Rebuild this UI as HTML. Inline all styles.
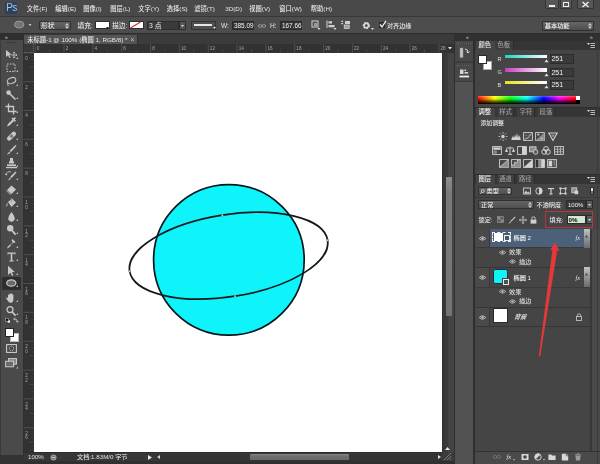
<!DOCTYPE html>
<html lang="zh-CN"><head><meta charset="utf-8"><title>Photoshop</title>
<style>
html,body{margin:0;padding:0;}
body{width:600px;height:464px;overflow:hidden;background:#4a4a4a;position:relative;font-family:"Liberation Sans","Noto Sans CJK SC",sans-serif;}
#app{position:absolute;left:0;top:0;width:600px;height:464px;overflow:hidden;will-change:transform;}
#app div{position:absolute;box-sizing:border-box;}
#app svg{position:absolute;overflow:visible;}
.t{position:absolute;white-space:nowrap;line-height:12px;height:12px;letter-spacing:0;font-weight:500;}
</style></head><body><div id="app">
<div style="left:0px;top:0px;width:600px;height:16px;background:#494949;"></div>
<div style="left:4.8px;top:1.5px;width:12.4px;height:12px;background:#30415a;"></div>
<span class="t" style="left:6.2px;top:1.5999999999999996px;font-size:10px;color:#a0c4f2;font-weight:400;letter-spacing:-0.6px;">Ps</span>
<span class="t" style="left:26.8px;top:2.8000000000000007px;font-size:6.25px;color:#e8e8e8;">文件(F)</span>
<span class="t" style="left:55.3px;top:2.8000000000000007px;font-size:6.25px;color:#e8e8e8;">编辑(E)</span>
<span class="t" style="left:83.3px;top:2.8000000000000007px;font-size:6.25px;color:#e8e8e8;">图像(I)</span>
<span class="t" style="left:110.3px;top:2.8000000000000007px;font-size:6.25px;color:#e8e8e8;">图层(L)</span>
<span class="t" style="left:138.3px;top:2.8000000000000007px;font-size:6.25px;color:#e8e8e8;">文字(Y)</span>
<span class="t" style="left:166.8px;top:2.8000000000000007px;font-size:6.25px;color:#e8e8e8;">选择(S)</span>
<span class="t" style="left:194.3px;top:2.8000000000000007px;font-size:6.25px;color:#e8e8e8;">滤镜(T)</span>
<span class="t" style="left:225.3px;top:2.8000000000000007px;font-size:6.25px;color:#e8e8e8;">3D(D)</span>
<span class="t" style="left:249.3px;top:2.8000000000000007px;font-size:6.25px;color:#e8e8e8;">视图(V)</span>
<span class="t" style="left:279.3px;top:2.8000000000000007px;font-size:6.25px;color:#e8e8e8;">窗口(W)</span>
<span class="t" style="left:310.8px;top:2.8000000000000007px;font-size:6.25px;color:#e8e8e8;">帮助(H)</span>
<div style="left:544.7px;top:-1px;width:14px;height:9.6px;background:#575757;border:1px solid #353535;border-radius:1px;"></div>
<div style="left:548.7px;top:5px;width:6px;height:1.6px;background:#f0f0f0;"></div>
<div style="left:559.7px;top:-1px;width:12.6px;height:9.6px;background:#575757;border:1px solid #353535;border-radius:1px;"></div>
<div style="left:563px;top:2.3px;width:6px;height:4.5px;border:1.2px solid #f0f0f0;"></div>
<div style="left:576.5px;top:-1px;width:17px;height:9.6px;background:#575757;border:1px solid #353535;border-radius:1px;"></div>
<svg style="left:581.5px;top:2px" width="7" height="5" viewBox="0 0 7 5"><path d="M0.5 0 L6.5 5 M6.5 0 L0.5 5" stroke="#f0f0f0" stroke-width="1.4"/></svg>
<div style="left:0px;top:15.6px;width:600px;height:17.9px;background:#4d4d4d;border-top:1px solid #383838;"></div>
<svg style="left:13.5px;top:20px" width="19" height="9" viewBox="0 0 19 9"><ellipse cx="5.2" cy="4.6" rx="4.6" ry="3.3" fill="#747474" stroke="#a4a4a4" stroke-width="0.9"/><path d="M14.5 4 L17.5 4 L16 6 Z" fill="#d0d0d0"/></svg>
<div style="left:38.5px;top:20.5px;width:32.5px;height:9.5px;background:linear-gradient(180deg,#646464,#535353);border:1px solid #303030;border-radius:1px;"></div>
<span class="t" style="left:41px;top:19.5px;font-size:6.8px;color:#e0e0e0;">形状</span>
<svg style="left:65px;top:22.5px" width="4" height="6" viewBox="0 0 4 6"><path d="M0 2.4 L2 0 L4 2.4 Z M0 3.6 L2 6 L4 3.6 Z" fill="#d0d0d0"/></svg>
<span class="t" style="left:77.5px;top:19.5px;font-size:6.8px;color:#e0e0e0;">填充:</span>
<div style="left:95px;top:21px;width:14.5px;height:8px;background:#ffffff;border:1px solid #2e2e2e;"></div>
<svg style="left:106px;top:26.5px" width="3" height="2" viewBox="0 0 3 2"><path d="M0 0 L3 0 L1.5 2 Z" fill="#222"/></svg>
<span class="t" style="left:112px;top:19.5px;font-size:6.8px;color:#e0e0e0;">描边:</span>
<div style="left:129px;top:21px;width:14.5px;height:8px;background:#ffffff;border:1px solid #2e2e2e;"></div>
<svg style="left:130px;top:22px" width="12.5" height="6" viewBox="0 0 12.5 6"><path d="M0.5 6 L10.5 0" stroke="#d23030" stroke-width="1.3"/></svg>
<div style="left:146.5px;top:20.5px;width:32px;height:9.5px;background:#3a3a3a;border:1px solid #2e2e2e;"></div>
<span class="t" style="left:149px;top:19.5px;font-size:6.8px;color:#e8e8e8;">3 点</span>
<div style="left:179px;top:20.5px;width:6.5px;height:9.5px;background:#565656;border:1px solid #2e2e2e;"></div>
<svg style="left:181px;top:24.5px" width="3" height="2" viewBox="0 0 3 2"><path d="M0 0 L3 0 L1.5 2 Z" fill="#ddd"/></svg>
<div style="left:191px;top:20.5px;width:25px;height:9.5px;background:#4f4f4f;border:1px solid #333;"></div>
<div style="left:193.5px;top:24px;width:18px;height:2px;background:#e6e6e6;"></div>
<svg style="left:212.5px;top:26.5px" width="3" height="2" viewBox="0 0 3 2"><path d="M0 0 L3 0 L1.5 2 Z" fill="#ddd"/></svg>
<span class="t" style="left:221px;top:19.5px;font-size:6.6px;color:#e0e0e0;">W:</span>
<div style="left:232px;top:20.5px;width:22px;height:9.5px;background:#363636;border:1px solid #2a2a2a;"></div>
<span class="t" style="left:234px;top:19.5px;font-size:6.4px;color:#f0f0f0;">385.09</span>
<svg style="left:258px;top:23.5px" width="8" height="4" viewBox="0 0 8 4"><rect x="0.4" y="0.6" width="3.4" height="2.8" rx="1.4" fill="none" stroke="#aaa" stroke-width="0.8"/><rect x="4.2" y="0.6" width="3.4" height="2.8" rx="1.4" fill="none" stroke="#aaa" stroke-width="0.8"/></svg>
<span class="t" style="left:270px;top:19.5px;font-size:6.6px;color:#e0e0e0;">H:</span>
<div style="left:280px;top:20.5px;width:22px;height:9.5px;background:#363636;border:1px solid #2a2a2a;"></div>
<span class="t" style="left:282px;top:19.5px;font-size:6.4px;color:#f0f0f0;">167.66</span>
<svg style="left:311px;top:20px" width="10" height="10" viewBox="0 0 10 10"><rect x="1" y="1" width="6" height="6" fill="none" stroke="#d5d5d5" stroke-width="1"/><rect x="3" y="3" width="3" height="3" fill="#9a9a9a"/><path d="M6.5 8 L9.5 8 L8 10 Z" fill="#ddd"/></svg>
<svg style="left:326px;top:20px" width="11" height="10" viewBox="0 0 11 10"><path d="M1 0.5 V8" stroke="#d5d5d5" stroke-width="1"/><rect x="2.5" y="1.2" width="3.5" height="2.3" fill="#cfcfcf"/><rect x="2.5" y="5" width="6" height="2.3" fill="#cfcfcf"/><path d="M7.5 8 L10.5 8 L9 10 Z" fill="#ddd"/></svg>
<svg style="left:341px;top:20px" width="11" height="10" viewBox="0 0 11 10"><rect x="4" y="1" width="5" height="3" fill="#cfcfcf"/><rect x="3.2" y="5" width="5" height="3.4" fill="#9f9f9f" stroke="#ddd" stroke-width="0.7"/><path d="M0 2 L2.4 2 L1.2 0.2 Z M0 3 L2.4 3 L1.2 4.8 Z" fill="#ddd"/></svg>
<svg style="left:361.5px;top:20.5px" width="12" height="10" viewBox="0 0 12 10"><circle cx="4.3" cy="4.5" r="2.6" fill="none" stroke="#d8d8d8" stroke-width="2" stroke-dasharray="1.6 0.9"/><circle cx="4.3" cy="4.5" r="2.2" fill="none" stroke="#d8d8d8" stroke-width="1.4"/><path d="M9 7 L12 7 L10.5 9 Z" fill="#ddd"/></svg>
<div style="left:378.5px;top:21.5px;width:6.5px;height:6.5px;background:#3a3a3a;border:1px solid #2a2a2a;"></div>
<svg style="left:379px;top:19.5px" width="8" height="8" viewBox="0 0 8 8"><path d="M1 4.5 L3 7 L7 0.8" stroke="#f2f2f2" stroke-width="1.3" fill="none"/></svg>
<span class="t" style="left:387px;top:19.5px;font-size:6.1px;color:#e6e6e6;">对齐边缘</span>
<div style="left:541.8px;top:20.5px;width:52px;height:10.6px;background:linear-gradient(180deg,#676767,#4e4e4e);border:1px solid #303030;border-radius:1px;"></div>
<span class="t" style="left:544.8px;top:19.8px;font-size:6.2px;color:#f4f4f4;">基本功能</span>
<svg style="left:587.5px;top:22.8px" width="4" height="6" viewBox="0 0 4 6"><path d="M0 2.4 L2 0 L4 2.4 Z M0 3.6 L2 6 L4 3.6 Z" fill="#d0d0d0"/></svg>
<div style="left:0px;top:33px;width:600px;height:1.2px;background:#2d2d2d;"></div>
<div style="left:0px;top:34px;width:23px;height:430px;background:#4a4a4a;"></div>
<div style="left:0px;top:34px;width:23px;height:6px;background:#2f2f2f;"></div>
<span class="t" style="left:5px;top:30.5px;font-size:5px;color:#cfcfcf;line-height:12px;">»</span>
<div style="left:22.5px;top:34px;width:1px;height:430px;background:#303030;"></div>
<div style="left:0px;top:40px;width:1.2px;height:415px;background:#3a3a3a;"></div>
<div style="left:7px;top:42px;width:9px;height:1px;border-top:1px dotted #2e2e2e;"></div>
<svg style="left:5px;top:48.5px" width="13" height="12" viewBox="0 0 13 12"><path d="M1 1 L1 8 L3 6.2 L4.4 9 L5.6 8.4 L4.3 5.8 L6.6 5.6 Z" fill="#c8c8c8"/><path d="M9 3 V9 M6 6 H12 M9 3 L8 4.2 M9 3 L10 4.2 M9 9 L8 7.8 M9 9 L10 7.8 M12 6 L10.8 5 M12 6 L10.8 7" stroke="#c8c8c8" stroke-width="0.8" fill="none"/><path d="M11 10 L13 10 L13 8 Z" fill="#bdbdbd"/></svg>
<svg style="left:5px;top:62px" width="13" height="12" viewBox="0 0 13 12"><rect x="2" y="2" width="8" height="7.5" fill="none" stroke="#c8c8c8" stroke-width="1" stroke-dasharray="1.6 1.2"/><path d="M11 10 L13 10 L13 8 Z" fill="#bdbdbd"/></svg>
<svg style="left:5px;top:75.5px" width="13" height="12" viewBox="0 0 13 12"><ellipse cx="6.5" cy="4.6" rx="4.4" ry="2.8" fill="none" stroke="#c8c8c8" stroke-width="1.1" transform="rotate(-20 6.5 4.6)"/><path d="M3.2 6.6 Q2 8.5 3.4 10" stroke="#c8c8c8" stroke-width="1" fill="none"/><path d="M11 10 L13 10 L13 8 Z" fill="#bdbdbd"/></svg>
<svg style="left:5px;top:89px" width="13" height="12" viewBox="0 0 13 12"><path d="M4.5 4.5 L10.5 10.5" stroke="#c8c8c8" stroke-width="1.6"/><circle cx="3.6" cy="3.6" r="2.3" fill="#c8c8c8"/><path d="M11 10 L13 10 L13 8 Z" fill="#bdbdbd"/></svg>
<svg style="left:5px;top:102.5px" width="13" height="12" viewBox="0 0 13 12"><path d="M3.5 0.5 V8.5 H11.5 M0.5 3.5 H8.5 V11.5" stroke="#c8c8c8" stroke-width="1.3" fill="none"/><path d="M11 10 L13 10 L13 8 Z" fill="#bdbdbd"/></svg>
<svg style="left:5px;top:116px" width="13" height="12" viewBox="0 0 13 12"><path d="M2 10.5 L3 8 L7.5 3.5 L9 5 L4.5 9.5 Z" fill="#c8c8c8"/><path d="M7 2 L10.4 5.4 M8.4 3.6 L10.4 1.6" stroke="#c8c8c8" stroke-width="1.6"/><path d="M11 10 L13 10 L13 8 Z" fill="#bdbdbd"/></svg>
<svg style="left:5px;top:130px" width="13" height="12" viewBox="0 0 13 12"><rect x="1" y="4" width="11" height="4.4" rx="2.2" fill="#c8c8c8" transform="rotate(-45 6.5 6.2)"/><rect x="5" y="4.7" width="3" height="3" fill="#777" transform="rotate(-45 6.5 6.2)"/><path d="M11 10 L13 10 L13 8 Z" fill="#bdbdbd"/></svg>
<svg style="left:5px;top:143.5px" width="13" height="12" viewBox="0 0 13 12"><path d="M10.5 1 L11.5 2 L6 8 L4.6 6.8 Z" fill="#c8c8c8"/><path d="M4.2 7.4 L5.4 8.6 Q4 10.8 1.5 10.5 Q3.4 9.4 4.2 7.4 Z" fill="#c8c8c8"/><path d="M11 10 L13 10 L13 8 Z" fill="#bdbdbd"/></svg>
<svg style="left:5px;top:157px" width="13" height="12" viewBox="0 0 13 12"><path d="M5 1 H8 V3.4 L9 5 V6.4 H4 V5 L5 3.4 Z" fill="#c8c8c8"/><rect x="2" y="7.4" width="9" height="1.8" fill="#c8c8c8"/><rect x="1" y="10" width="11" height="1.2" fill="#c8c8c8"/><path d="M11 10 L13 10 L13 8 Z" fill="#bdbdbd"/></svg>
<svg style="left:5px;top:170px" width="13" height="12" viewBox="0 0 13 12"><path d="M10.5 1.5 L11.5 2.5 L6.5 8 L5.2 6.8 Z" fill="#c8c8c8"/><path d="M4.8 7.4 L6 8.6 Q4.8 10.6 2.5 10.4 Q4.2 9.4 4.8 7.4 Z" fill="#c8c8c8"/><path d="M1 5 A3.5 3.5 0 0 1 6 2" stroke="#c8c8c8" stroke-width="0.9" fill="none"/><path d="M0 3.6 L1 5.6 L2.6 4.2 Z" fill="#c8c8c8"/><path d="M11 10 L13 10 L13 8 Z" fill="#bdbdbd"/></svg>
<svg style="left:5px;top:183.5px" width="13" height="12" viewBox="0 0 13 12"><path d="M6.5 1.5 L11 5.5 L6.5 10 L2 6 Z" fill="#c8c8c8"/><path d="M2 6 L6.5 10 L5.2 11 L1 7 Z" fill="#8d8d8d"/><path d="M11 10 L13 10 L13 8 Z" fill="#bdbdbd"/></svg>
<svg style="left:5px;top:197px" width="13" height="12" viewBox="0 0 13 12"><path d="M3 5 L7 1.5 L11 5.5 L6.5 10 Z" fill="#c8c8c8"/><path d="M2.6 5.4 Q0.6 8 1.6 10 Q3 8.6 2.6 5.4 Z" fill="#c8c8c8"/><path d="M6.4 0.5 V5" stroke="#888" stroke-width="0.8"/><path d="M11 10 L13 10 L13 8 Z" fill="#bdbdbd"/></svg>
<svg style="left:5px;top:210.5px" width="13" height="12" viewBox="0 0 13 12"><path d="M6.5 1 Q10.6 6.2 9.6 8.6 Q8.6 10.8 6.5 10.8 Q4.4 10.8 3.4 8.6 Q2.4 6.2 6.5 1 Z" fill="#c8c8c8"/><path d="M11 10 L13 10 L13 8 Z" fill="#bdbdbd"/></svg>
<svg style="left:5px;top:224px" width="13" height="12" viewBox="0 0 13 12"><circle cx="5.2" cy="4.2" r="3.2" fill="#c8c8c8"/><path d="M7.2 6.6 L10.6 10.6" stroke="#c8c8c8" stroke-width="1.7"/><path d="M11 10 L13 10 L13 8 Z" fill="#bdbdbd"/></svg>
<svg style="left:5px;top:238px" width="13" height="12" viewBox="0 0 13 12"><path d="M7.5 1 L10.5 4 L9.4 5 L8 4.8 L4 9.6 L2 10.5 L2.8 8.4 L7.6 4.4 L6.6 2.2 Z" fill="#c8c8c8"/><circle cx="6.3" cy="6" r="0.8" fill="#555"/><path d="M11 10 L13 10 L13 8 Z" fill="#bdbdbd"/></svg>
<svg style="left:5px;top:251px" width="13" height="12" viewBox="0 0 13 12"><path d="M2.5 1.5 H10.5 V3.6 H9.6 V2.8 H7.3 V9.6 H8.6 V10.6 H4.4 V9.6 H5.7 V2.8 H3.4 V3.6 H2.5 Z" fill="#c8c8c8"/><path d="M11 10 L13 10 L13 8 Z" fill="#bdbdbd"/></svg>
<svg style="left:5px;top:264.5px" width="13" height="12" viewBox="0 0 13 12"><path d="M3 0.8 L3 10 L5.4 7.8 L7 11 L8.3 10.3 L6.8 7.2 L9.8 7 Z" fill="#c8c8c8"/><path d="M11 10 L13 10 L13 8 Z" fill="#bdbdbd"/></svg>
<div style="left:2px;top:276.5px;width:19px;height:13px;background:#2e2e2e;border-radius:1.5px;"></div>
<svg style="left:5px;top:277px" width="13" height="12" viewBox="0 0 13 12"><ellipse cx="6.3" cy="6" rx="4.6" ry="3.2" fill="#6a6a6a" stroke="#c8c8c8" stroke-width="1.2"/><path d="M11 10 L13 10 L13 8 Z" fill="#bdbdbd"/></svg>
<svg style="left:5px;top:292px" width="13" height="12" viewBox="0 0 13 12"><path d="M3 6 V3 Q3.6 2 4.2 3 V2 Q4.9 1 5.6 2 V1.8 Q6.3 0.8 7 1.8 V2.6 Q7.7 1.8 8.4 2.8 V7 Q8.4 10.6 6 10.8 Q3.6 10.8 2.6 8.6 L1 6 Q1.6 5 3 6 Z" fill="#c8c8c8"/><path d="M11 10 L13 10 L13 8 Z" fill="#bdbdbd"/></svg>
<svg style="left:5px;top:304.5px" width="13" height="12" viewBox="0 0 13 12"><circle cx="5" cy="4.6" r="3" fill="none" stroke="#c8c8c8" stroke-width="1.3"/><path d="M7.2 7 L10.6 10.6" stroke="#c8c8c8" stroke-width="1.7"/><path d="M11 10 L13 10 L13 8 Z" fill="#bdbdbd"/></svg>
<svg style="left:5px;top:317px" width="14" height="8" viewBox="0 0 14 8"><rect x="2.2" y="3" width="3" height="3" fill="#fff" stroke="#222" stroke-width="0.5"/><rect x="0.5" y="1.2" width="3" height="3" fill="#111" stroke="#ccc" stroke-width="0.5"/><path d="M9.5 2 Q12 1.6 12.4 4.6 M8.6 2 L10.2 0.8 M8.6 2 L10.2 3.2 M12.4 5.4 L11.2 4 M12.4 5.4 L13.6 4" stroke="#d0d0d0" stroke-width="0.8" fill="none"/></svg>
<div style="left:9.8px;top:332.6px;width:9.4px;height:9.4px;background:#ffffff;border:1px solid #222;outline:0.6px solid #bbb;outline-offset:-1.6px;"></div>
<div style="left:4.6px;top:327.6px;width:9.6px;height:9.6px;background:#ffffff;border:1px solid #222;"></div>
<svg style="left:6px;top:344px" width="11" height="9" viewBox="0 0 11 9"><rect x="0.6" y="0.6" width="9.8" height="7.8" fill="none" stroke="#d4d4d4" stroke-width="1"/><circle cx="5.5" cy="4.5" r="2.2" fill="none" stroke="#d4d4d4" stroke-width="0.9" stroke-dasharray="1 0.8"/></svg>
<svg style="left:5px;top:357.5px" width="14" height="11" viewBox="0 0 14 11"><rect x="3.5" y="0.6" width="8" height="5.6" fill="#8a8a8a" stroke="#d4d4d4" stroke-width="0.9"/><rect x="0.6" y="3.2" width="8" height="5.6" fill="#6a6a6a" stroke="#d4d4d4" stroke-width="0.9"/><path d="M11 10.5 L13 10.5 L13 8.5 Z" fill="#bdbdbd"/></svg>
<div style="left:23.5px;top:34px;width:430px;height:10px;background:#3b3b3b;"></div>
<div style="left:23.5px;top:35px;width:114px;height:9px;background:#555555;border-right:1px solid #2e2e2e;"></div>
<span class="t" style="left:27.3px;top:33.6px;font-size:6.25px;color:#e8e8e8;">未标题-1 @ 100% (椭圆 1, RGB/8) *</span>
<span class="t" style="left:130.5px;top:33.6px;font-size:6.5px;color:#d0d0d0;">×</span>
<div style="left:23.5px;top:44px;width:430px;height:8.5px;background:#323232;"></div>
<div style="left:23.5px;top:44px;width:10.5px;height:408px;background:#323232;"></div>
<div style="left:23.5px;top:44px;width:10.5px;height:8.5px;background:#383838;border-right:1px dotted #666;border-bottom:1px dotted #666;"></div>
<svg style="left:0;top:0" width="600" height="464" viewBox="0 0 600 464" font-family="Liberation Sans, sans-serif"><path d="M35.20 44 V52.5" stroke="#5c5c5c" stroke-width="0.7"/><text x="36.80" y="49.8" font-size="4.6" fill="#a6a6a6">0</text><path d="M38.80 51.8 V52.5" stroke="#484848" stroke-width="0.6"/><path d="M42.41 51 V52.5" stroke="#484848" stroke-width="0.6"/><path d="M46.02 51.8 V52.5" stroke="#484848" stroke-width="0.6"/><path d="M49.62 49.5 V52.5" stroke="#505050" stroke-width="0.7"/><path d="M53.23 51.8 V52.5" stroke="#484848" stroke-width="0.6"/><path d="M56.83 51 V52.5" stroke="#484848" stroke-width="0.6"/><path d="M60.44 51.8 V52.5" stroke="#484848" stroke-width="0.6"/><path d="M64.04 44 V52.5" stroke="#5c5c5c" stroke-width="0.7"/><text x="65.64" y="49.8" font-size="4.6" fill="#a6a6a6">2</text><path d="M67.65 51.8 V52.5" stroke="#484848" stroke-width="0.6"/><path d="M71.25 51 V52.5" stroke="#484848" stroke-width="0.6"/><path d="M74.86 51.8 V52.5" stroke="#484848" stroke-width="0.6"/><path d="M78.46 49.5 V52.5" stroke="#505050" stroke-width="0.7"/><path d="M82.07 51.8 V52.5" stroke="#484848" stroke-width="0.6"/><path d="M85.67 51 V52.5" stroke="#484848" stroke-width="0.6"/><path d="M89.28 51.8 V52.5" stroke="#484848" stroke-width="0.6"/><path d="M92.88 44 V52.5" stroke="#5c5c5c" stroke-width="0.7"/><text x="94.48" y="49.8" font-size="4.6" fill="#a6a6a6">4</text><path d="M96.48 51.8 V52.5" stroke="#484848" stroke-width="0.6"/><path d="M100.09 51 V52.5" stroke="#484848" stroke-width="0.6"/><path d="M103.69 51.8 V52.5" stroke="#484848" stroke-width="0.6"/><path d="M107.30 49.5 V52.5" stroke="#505050" stroke-width="0.7"/><path d="M110.91 51.8 V52.5" stroke="#484848" stroke-width="0.6"/><path d="M114.51 51 V52.5" stroke="#484848" stroke-width="0.6"/><path d="M118.11 51.8 V52.5" stroke="#484848" stroke-width="0.6"/><path d="M121.72 44 V52.5" stroke="#5c5c5c" stroke-width="0.7"/><text x="123.32" y="49.8" font-size="4.6" fill="#a6a6a6">6</text><path d="M125.33 51.8 V52.5" stroke="#484848" stroke-width="0.6"/><path d="M128.93 51 V52.5" stroke="#484848" stroke-width="0.6"/><path d="M132.53 51.8 V52.5" stroke="#484848" stroke-width="0.6"/><path d="M136.14 49.5 V52.5" stroke="#505050" stroke-width="0.7"/><path d="M139.74 51.8 V52.5" stroke="#484848" stroke-width="0.6"/><path d="M143.35 51 V52.5" stroke="#484848" stroke-width="0.6"/><path d="M146.95 51.8 V52.5" stroke="#484848" stroke-width="0.6"/><path d="M150.56 44 V52.5" stroke="#5c5c5c" stroke-width="0.7"/><text x="152.16" y="49.8" font-size="4.6" fill="#a6a6a6">8</text><path d="M154.16 51.8 V52.5" stroke="#484848" stroke-width="0.6"/><path d="M157.77 51 V52.5" stroke="#484848" stroke-width="0.6"/><path d="M161.38 51.8 V52.5" stroke="#484848" stroke-width="0.6"/><path d="M164.98 49.5 V52.5" stroke="#505050" stroke-width="0.7"/><path d="M168.59 51.8 V52.5" stroke="#484848" stroke-width="0.6"/><path d="M172.19 51 V52.5" stroke="#484848" stroke-width="0.6"/><path d="M175.80 51.8 V52.5" stroke="#484848" stroke-width="0.6"/><path d="M179.40 44 V52.5" stroke="#5c5c5c" stroke-width="0.7"/><text x="181.00" y="49.8" font-size="4.6" fill="#a6a6a6">10</text><path d="M183.00 51.8 V52.5" stroke="#484848" stroke-width="0.6"/><path d="M186.61 51 V52.5" stroke="#484848" stroke-width="0.6"/><path d="M190.21 51.8 V52.5" stroke="#484848" stroke-width="0.6"/><path d="M193.82 49.5 V52.5" stroke="#505050" stroke-width="0.7"/><path d="M197.42 51.8 V52.5" stroke="#484848" stroke-width="0.6"/><path d="M201.03 51 V52.5" stroke="#484848" stroke-width="0.6"/><path d="M204.63 51.8 V52.5" stroke="#484848" stroke-width="0.6"/><path d="M208.24 44 V52.5" stroke="#5c5c5c" stroke-width="0.7"/><text x="209.84" y="49.8" font-size="4.6" fill="#a6a6a6">12</text><path d="M211.84 51.8 V52.5" stroke="#484848" stroke-width="0.6"/><path d="M215.45 51 V52.5" stroke="#484848" stroke-width="0.6"/><path d="M219.06 51.8 V52.5" stroke="#484848" stroke-width="0.6"/><path d="M222.66 49.5 V52.5" stroke="#505050" stroke-width="0.7"/><path d="M226.27 51.8 V52.5" stroke="#484848" stroke-width="0.6"/><path d="M229.87 51 V52.5" stroke="#484848" stroke-width="0.6"/><path d="M233.48 51.8 V52.5" stroke="#484848" stroke-width="0.6"/><path d="M237.08 44 V52.5" stroke="#5c5c5c" stroke-width="0.7"/><text x="238.68" y="49.8" font-size="4.6" fill="#a6a6a6">14</text><path d="M240.68 51.8 V52.5" stroke="#484848" stroke-width="0.6"/><path d="M244.29 51 V52.5" stroke="#484848" stroke-width="0.6"/><path d="M247.89 51.8 V52.5" stroke="#484848" stroke-width="0.6"/><path d="M251.50 49.5 V52.5" stroke="#505050" stroke-width="0.7"/><path d="M255.10 51.8 V52.5" stroke="#484848" stroke-width="0.6"/><path d="M258.71 51 V52.5" stroke="#484848" stroke-width="0.6"/><path d="M262.31 51.8 V52.5" stroke="#484848" stroke-width="0.6"/><path d="M265.92 44 V52.5" stroke="#5c5c5c" stroke-width="0.7"/><text x="267.52" y="49.8" font-size="4.6" fill="#a6a6a6">16</text><path d="M269.53 51.8 V52.5" stroke="#484848" stroke-width="0.6"/><path d="M273.13 51 V52.5" stroke="#484848" stroke-width="0.6"/><path d="M276.74 51.8 V52.5" stroke="#484848" stroke-width="0.6"/><path d="M280.34 49.5 V52.5" stroke="#505050" stroke-width="0.7"/><path d="M283.94 51.8 V52.5" stroke="#484848" stroke-width="0.6"/><path d="M287.55 51 V52.5" stroke="#484848" stroke-width="0.6"/><path d="M291.15 51.8 V52.5" stroke="#484848" stroke-width="0.6"/><path d="M294.76 44 V52.5" stroke="#5c5c5c" stroke-width="0.7"/><text x="296.36" y="49.8" font-size="4.6" fill="#a6a6a6">18</text><path d="M298.37 51.8 V52.5" stroke="#484848" stroke-width="0.6"/><path d="M301.97 51 V52.5" stroke="#484848" stroke-width="0.6"/><path d="M305.57 51.8 V52.5" stroke="#484848" stroke-width="0.6"/><path d="M309.18 49.5 V52.5" stroke="#505050" stroke-width="0.7"/><path d="M312.79 51.8 V52.5" stroke="#484848" stroke-width="0.6"/><path d="M316.39 51 V52.5" stroke="#484848" stroke-width="0.6"/><path d="M320.00 51.8 V52.5" stroke="#484848" stroke-width="0.6"/><path d="M323.60 44 V52.5" stroke="#5c5c5c" stroke-width="0.7"/><text x="325.20" y="49.8" font-size="4.6" fill="#a6a6a6">20</text><path d="M327.20 51.8 V52.5" stroke="#484848" stroke-width="0.6"/><path d="M330.81 51 V52.5" stroke="#484848" stroke-width="0.6"/><path d="M334.41 51.8 V52.5" stroke="#484848" stroke-width="0.6"/><path d="M338.02 49.5 V52.5" stroke="#505050" stroke-width="0.7"/><path d="M341.62 51.8 V52.5" stroke="#484848" stroke-width="0.6"/><path d="M345.23 51 V52.5" stroke="#484848" stroke-width="0.6"/><path d="M348.83 51.8 V52.5" stroke="#484848" stroke-width="0.6"/><path d="M352.44 44 V52.5" stroke="#5c5c5c" stroke-width="0.7"/><text x="354.04" y="49.8" font-size="4.6" fill="#a6a6a6">22</text><path d="M356.05 51.8 V52.5" stroke="#484848" stroke-width="0.6"/><path d="M359.65 51 V52.5" stroke="#484848" stroke-width="0.6"/><path d="M363.25 51.8 V52.5" stroke="#484848" stroke-width="0.6"/><path d="M366.86 49.5 V52.5" stroke="#505050" stroke-width="0.7"/><path d="M370.47 51.8 V52.5" stroke="#484848" stroke-width="0.6"/><path d="M374.07 51 V52.5" stroke="#484848" stroke-width="0.6"/><path d="M377.68 51.8 V52.5" stroke="#484848" stroke-width="0.6"/><path d="M381.28 44 V52.5" stroke="#5c5c5c" stroke-width="0.7"/><text x="382.88" y="49.8" font-size="4.6" fill="#a6a6a6">24</text><path d="M384.88 51.8 V52.5" stroke="#484848" stroke-width="0.6"/><path d="M388.49 51 V52.5" stroke="#484848" stroke-width="0.6"/><path d="M392.09 51.8 V52.5" stroke="#484848" stroke-width="0.6"/><path d="M395.70 49.5 V52.5" stroke="#505050" stroke-width="0.7"/><path d="M399.31 51.8 V52.5" stroke="#484848" stroke-width="0.6"/><path d="M402.91 51 V52.5" stroke="#484848" stroke-width="0.6"/><path d="M406.51 51.8 V52.5" stroke="#484848" stroke-width="0.6"/><path d="M410.12 44 V52.5" stroke="#5c5c5c" stroke-width="0.7"/><text x="411.72" y="49.8" font-size="4.6" fill="#a6a6a6">26</text><path d="M413.73 51.8 V52.5" stroke="#484848" stroke-width="0.6"/><path d="M417.33 51 V52.5" stroke="#484848" stroke-width="0.6"/><path d="M420.94 51.8 V52.5" stroke="#484848" stroke-width="0.6"/><path d="M424.54 49.5 V52.5" stroke="#505050" stroke-width="0.7"/><path d="M428.14 51.8 V52.5" stroke="#484848" stroke-width="0.6"/><path d="M431.75 51 V52.5" stroke="#484848" stroke-width="0.6"/><path d="M435.35 51.8 V52.5" stroke="#484848" stroke-width="0.6"/><path d="M438.96 44 V52.5" stroke="#5c5c5c" stroke-width="0.7"/><text x="440.56" y="49.8" font-size="4.6" fill="#a6a6a6">28</text><path d="M23.5 52.80 H34" stroke="#5c5c5c" stroke-width="0.7"/><text x="25.2" y="59.80" font-size="4.6" fill="#a6a6a6">0</text><path d="M32.4 56.40 H34" stroke="#484848" stroke-width="0.6"/><path d="M31.5 60.01 H34" stroke="#484848" stroke-width="0.6"/><path d="M32.4 63.61 H34" stroke="#484848" stroke-width="0.6"/><path d="M29.5 67.22 H34" stroke="#505050" stroke-width="0.7"/><path d="M32.4 70.83 H34" stroke="#484848" stroke-width="0.6"/><path d="M31.5 74.43 H34" stroke="#484848" stroke-width="0.6"/><path d="M32.4 78.03 H34" stroke="#484848" stroke-width="0.6"/><path d="M23.5 81.64 H34" stroke="#5c5c5c" stroke-width="0.7"/><text x="25.2" y="88.64" font-size="4.6" fill="#a6a6a6">2</text><path d="M32.4 85.25 H34" stroke="#484848" stroke-width="0.6"/><path d="M31.5 88.85 H34" stroke="#484848" stroke-width="0.6"/><path d="M32.4 92.45 H34" stroke="#484848" stroke-width="0.6"/><path d="M29.5 96.06 H34" stroke="#505050" stroke-width="0.7"/><path d="M32.4 99.67 H34" stroke="#484848" stroke-width="0.6"/><path d="M31.5 103.27 H34" stroke="#484848" stroke-width="0.6"/><path d="M32.4 106.88 H34" stroke="#484848" stroke-width="0.6"/><path d="M23.5 110.48 H34" stroke="#5c5c5c" stroke-width="0.7"/><text x="25.2" y="117.48" font-size="4.6" fill="#a6a6a6">4</text><path d="M32.4 114.08 H34" stroke="#484848" stroke-width="0.6"/><path d="M31.5 117.69 H34" stroke="#484848" stroke-width="0.6"/><path d="M32.4 121.29 H34" stroke="#484848" stroke-width="0.6"/><path d="M29.5 124.90 H34" stroke="#505050" stroke-width="0.7"/><path d="M32.4 128.50 H34" stroke="#484848" stroke-width="0.6"/><path d="M31.5 132.11 H34" stroke="#484848" stroke-width="0.6"/><path d="M32.4 135.72 H34" stroke="#484848" stroke-width="0.6"/><path d="M23.5 139.32 H34" stroke="#5c5c5c" stroke-width="0.7"/><text x="25.2" y="146.32" font-size="4.6" fill="#a6a6a6">6</text><path d="M32.4 142.92 H34" stroke="#484848" stroke-width="0.6"/><path d="M31.5 146.53 H34" stroke="#484848" stroke-width="0.6"/><path d="M32.4 150.13 H34" stroke="#484848" stroke-width="0.6"/><path d="M29.5 153.74 H34" stroke="#505050" stroke-width="0.7"/><path d="M32.4 157.34 H34" stroke="#484848" stroke-width="0.6"/><path d="M31.5 160.95 H34" stroke="#484848" stroke-width="0.6"/><path d="M32.4 164.56 H34" stroke="#484848" stroke-width="0.6"/><path d="M23.5 168.16 H34" stroke="#5c5c5c" stroke-width="0.7"/><text x="25.2" y="175.16" font-size="4.6" fill="#a6a6a6">8</text><path d="M32.4 171.76 H34" stroke="#484848" stroke-width="0.6"/><path d="M31.5 175.37 H34" stroke="#484848" stroke-width="0.6"/><path d="M32.4 178.97 H34" stroke="#484848" stroke-width="0.6"/><path d="M29.5 182.58 H34" stroke="#505050" stroke-width="0.7"/><path d="M32.4 186.18 H34" stroke="#484848" stroke-width="0.6"/><path d="M31.5 189.79 H34" stroke="#484848" stroke-width="0.6"/><path d="M32.4 193.39 H34" stroke="#484848" stroke-width="0.6"/><path d="M23.5 197.00 H34" stroke="#5c5c5c" stroke-width="0.7"/><text x="25.2" y="204.00" font-size="4.6" fill="#a6a6a6">1</text><text x="25.2" y="208.60" font-size="4.6" fill="#a6a6a6">0</text><path d="M32.4 200.60 H34" stroke="#484848" stroke-width="0.6"/><path d="M31.5 204.21 H34" stroke="#484848" stroke-width="0.6"/><path d="M32.4 207.81 H34" stroke="#484848" stroke-width="0.6"/><path d="M29.5 211.42 H34" stroke="#505050" stroke-width="0.7"/><path d="M32.4 215.03 H34" stroke="#484848" stroke-width="0.6"/><path d="M31.5 218.63 H34" stroke="#484848" stroke-width="0.6"/><path d="M32.4 222.24 H34" stroke="#484848" stroke-width="0.6"/><path d="M23.5 225.84 H34" stroke="#5c5c5c" stroke-width="0.7"/><text x="25.2" y="232.84" font-size="4.6" fill="#a6a6a6">1</text><text x="25.2" y="237.44" font-size="4.6" fill="#a6a6a6">2</text><path d="M32.4 229.44 H34" stroke="#484848" stroke-width="0.6"/><path d="M31.5 233.05 H34" stroke="#484848" stroke-width="0.6"/><path d="M32.4 236.65 H34" stroke="#484848" stroke-width="0.6"/><path d="M29.5 240.26 H34" stroke="#505050" stroke-width="0.7"/><path d="M32.4 243.86 H34" stroke="#484848" stroke-width="0.6"/><path d="M31.5 247.47 H34" stroke="#484848" stroke-width="0.6"/><path d="M32.4 251.07 H34" stroke="#484848" stroke-width="0.6"/><path d="M23.5 254.68 H34" stroke="#5c5c5c" stroke-width="0.7"/><text x="25.2" y="261.68" font-size="4.6" fill="#a6a6a6">1</text><text x="25.2" y="266.28" font-size="4.6" fill="#a6a6a6">4</text><path d="M32.4 258.29 H34" stroke="#484848" stroke-width="0.6"/><path d="M31.5 261.89 H34" stroke="#484848" stroke-width="0.6"/><path d="M32.4 265.50 H34" stroke="#484848" stroke-width="0.6"/><path d="M29.5 269.10 H34" stroke="#505050" stroke-width="0.7"/><path d="M32.4 272.71 H34" stroke="#484848" stroke-width="0.6"/><path d="M31.5 276.31 H34" stroke="#484848" stroke-width="0.6"/><path d="M32.4 279.92 H34" stroke="#484848" stroke-width="0.6"/><path d="M23.5 283.52 H34" stroke="#5c5c5c" stroke-width="0.7"/><text x="25.2" y="290.52" font-size="4.6" fill="#a6a6a6">1</text><text x="25.2" y="295.12" font-size="4.6" fill="#a6a6a6">6</text><path d="M32.4 287.12 H34" stroke="#484848" stroke-width="0.6"/><path d="M31.5 290.73 H34" stroke="#484848" stroke-width="0.6"/><path d="M32.4 294.33 H34" stroke="#484848" stroke-width="0.6"/><path d="M29.5 297.94 H34" stroke="#505050" stroke-width="0.7"/><path d="M32.4 301.55 H34" stroke="#484848" stroke-width="0.6"/><path d="M31.5 305.15 H34" stroke="#484848" stroke-width="0.6"/><path d="M32.4 308.75 H34" stroke="#484848" stroke-width="0.6"/><path d="M23.5 312.36 H34" stroke="#5c5c5c" stroke-width="0.7"/><text x="25.2" y="319.36" font-size="4.6" fill="#a6a6a6">1</text><text x="25.2" y="323.96" font-size="4.6" fill="#a6a6a6">8</text><path d="M32.4 315.97 H34" stroke="#484848" stroke-width="0.6"/><path d="M31.5 319.57 H34" stroke="#484848" stroke-width="0.6"/><path d="M32.4 323.18 H34" stroke="#484848" stroke-width="0.6"/><path d="M29.5 326.78 H34" stroke="#505050" stroke-width="0.7"/><path d="M32.4 330.39 H34" stroke="#484848" stroke-width="0.6"/><path d="M31.5 333.99 H34" stroke="#484848" stroke-width="0.6"/><path d="M32.4 337.60 H34" stroke="#484848" stroke-width="0.6"/><path d="M23.5 341.20 H34" stroke="#5c5c5c" stroke-width="0.7"/><text x="25.2" y="348.20" font-size="4.6" fill="#a6a6a6">2</text><text x="25.2" y="352.80" font-size="4.6" fill="#a6a6a6">0</text><path d="M32.4 344.81 H34" stroke="#484848" stroke-width="0.6"/><path d="M31.5 348.41 H34" stroke="#484848" stroke-width="0.6"/><path d="M32.4 352.01 H34" stroke="#484848" stroke-width="0.6"/><path d="M29.5 355.62 H34" stroke="#505050" stroke-width="0.7"/><path d="M32.4 359.23 H34" stroke="#484848" stroke-width="0.6"/><path d="M31.5 362.83 H34" stroke="#484848" stroke-width="0.6"/><path d="M32.4 366.44 H34" stroke="#484848" stroke-width="0.6"/><path d="M23.5 370.04 H34" stroke="#5c5c5c" stroke-width="0.7"/><text x="25.2" y="377.04" font-size="4.6" fill="#a6a6a6">2</text><text x="25.2" y="381.64" font-size="4.6" fill="#a6a6a6">2</text><path d="M32.4 373.65 H34" stroke="#484848" stroke-width="0.6"/><path d="M31.5 377.25 H34" stroke="#484848" stroke-width="0.6"/><path d="M32.4 380.86 H34" stroke="#484848" stroke-width="0.6"/><path d="M29.5 384.46 H34" stroke="#505050" stroke-width="0.7"/><path d="M32.4 388.07 H34" stroke="#484848" stroke-width="0.6"/><path d="M31.5 391.67 H34" stroke="#484848" stroke-width="0.6"/><path d="M32.4 395.28 H34" stroke="#484848" stroke-width="0.6"/><path d="M23.5 398.88 H34" stroke="#5c5c5c" stroke-width="0.7"/><text x="25.2" y="405.88" font-size="4.6" fill="#a6a6a6">2</text><text x="25.2" y="410.48" font-size="4.6" fill="#a6a6a6">4</text><path d="M32.4 402.49 H34" stroke="#484848" stroke-width="0.6"/><path d="M31.5 406.09 H34" stroke="#484848" stroke-width="0.6"/><path d="M32.4 409.69 H34" stroke="#484848" stroke-width="0.6"/><path d="M29.5 413.30 H34" stroke="#505050" stroke-width="0.7"/><path d="M32.4 416.91 H34" stroke="#484848" stroke-width="0.6"/><path d="M31.5 420.51 H34" stroke="#484848" stroke-width="0.6"/><path d="M32.4 424.12 H34" stroke="#484848" stroke-width="0.6"/><path d="M23.5 427.72 H34" stroke="#5c5c5c" stroke-width="0.7"/><text x="25.2" y="434.72" font-size="4.6" fill="#a6a6a6">2</text><text x="25.2" y="439.32" font-size="4.6" fill="#a6a6a6">6</text><path d="M32.4 431.33 H34" stroke="#484848" stroke-width="0.6"/><path d="M31.5 434.93 H34" stroke="#484848" stroke-width="0.6"/><path d="M32.4 438.54 H34" stroke="#484848" stroke-width="0.6"/><path d="M29.5 442.14 H34" stroke="#505050" stroke-width="0.7"/><path d="M32.4 445.75 H34" stroke="#484848" stroke-width="0.6"/><path d="M31.5 449.35 H34" stroke="#484848" stroke-width="0.6"/></svg>
<div style="left:34px;top:52.5px;width:408px;height:399.5px;background:#ffffff;"></div>
<div style="left:442px;top:52.5px;width:12px;height:399.5px;background:linear-gradient(90deg,#2e2e2e 0,#383838 1.5px,#3b3b3b 5.5px,#444 6.5px,#444 100%);"></div>
<svg style="left:447.5px;top:47px" width="4" height="3" viewBox="0 0 4 3"><path d="M0 0 L4 0 L2 2.6 Z" fill="#e8e8e8"/></svg>
<div style="left:445.5px;top:177px;width:6.5px;height:139px;background:linear-gradient(180deg,#8e8e8e,#7a7a7a 12%,#747474 100%);border-radius:1px;"></div>
<svg style="left:445px;top:446.5px" width="5" height="3" viewBox="0 0 5 3"><path d="M0 3 L5 3 L2.5 0 Z" fill="#e8e8e8"/></svg>
<div style="left:23.5px;top:452px;width:430px;height:12px;background:#373737;"></div>
<div style="left:23.5px;top:452px;width:430px;height:1px;background:#2c2c2c;"></div>
<span class="t" style="left:28px;top:451px;font-size:6.2px;color:#e0e0e0;">100%</span>
<svg style="left:49.5px;top:453.5px" width="7" height="7" viewBox="0 0 7 7"><circle cx="3.5" cy="3.5" r="2.6" fill="#777" stroke="#bbb" stroke-width="0.8"/><path d="M2 3.5 H5" stroke="#ddd" stroke-width="0.8"/></svg>
<span class="t" style="left:77px;top:451px;font-size:6.2px;color:#e0e0e0;">文档:1.83M/0 字节</span>
<svg style="left:148px;top:454.5px" width="4" height="5" viewBox="0 0 4 5"><path d="M0 0 L4 2.5 L0 5 Z" fill="#e6e6e6"/></svg>
<div style="left:155.5px;top:452px;width:1px;height:9px;background:#303030;"></div>
<svg style="left:157px;top:455px" width="3" height="4" viewBox="0 0 3 4"><path d="M3 0 L0 2 L3 4 Z" fill="#cfcfcf"/></svg>
<div style="left:160px;top:454px;width:282px;height:6.5px;background:#343434;"></div>
<div style="left:249.5px;top:454.3px;width:99px;height:5.8px;background:linear-gradient(180deg,#888888,#707070 30%,#686868);border-radius:1px;"></div>
<svg style="left:438px;top:455px" width="3" height="4" viewBox="0 0 3 4"><path d="M0 0 L3 2 L0 4 Z" fill="#e6e6e6"/></svg>
<div style="left:442px;top:452px;width:11.5px;height:12px;background:#3c3c3c;"></div>
<svg style="left:443px;top:452px" width="9" height="9" viewBox="0 0 9 9"><path d="M8 1 L1 8 M8 4 L4 8 M8 6.5 L6.5 8" stroke="#8a8a8a" stroke-width="0.8"/></svg>
<div style="left:0px;top:461px;width:454px;height:3px;background:#303030;"></div>
<div style="left:0px;top:455px;width:23.5px;height:9px;background:#333333;"></div>
<svg style="left:34px;top:53px" width="408" height="398" viewBox="34 53 408 398">
<circle cx="228.9" cy="259.9" r="75.3" fill="#0ff4fb" stroke="#07181c" stroke-width="1.7"/>
<g transform="rotate(-8.9 228.6 255.7)">
<ellipse cx="228.6" cy="255.7" rx="100.2" ry="41" fill="none" stroke="#15191c" stroke-width="1.7"/>
<g fill="#fff" stroke="#555" stroke-width="0.4">
<rect x="127.6" y="254.9" width="1.7" height="1.7"/><rect x="327.9" y="254.9" width="1.7" height="1.7"/>
<rect x="227.8" y="213.9" width="1.7" height="1.7"/><rect x="227.8" y="295.9" width="1.7" height="1.7"/>
</g></g>
</svg>
<div style="left:453.5px;top:34px;width:21px;height:430px;background:#525252;"></div>
<div style="left:453.5px;top:34px;width:146.5px;height:6.5px;background:#313131;"></div>
<span class="t" style="left:466px;top:30.799999999999997px;font-size:5px;color:#cfcfcf;">«</span>
<div style="left:453.5px;top:34px;width:1px;height:430px;background:#2f2f2f;"></div>
<div style="left:473px;top:34px;width:2px;height:430px;background:#2f2f2f;"></div>
<div style="left:454.5px;top:40.5px;width:18.5px;height:41px;background:#484848;"></div>
<div style="left:457px;top:43px;width:14px;height:1px;background:#3a3a3a;border-top:1px dotted #666;"></div>
<svg style="left:459px;top:46.5px" width="11" height="12" viewBox="0 0 11 12"><rect x="1" y="1" width="3" height="9.5" fill="#c4c4c4" stroke="#888" stroke-width="0.5"/><path d="M6 2 Q9.5 2 9 6 M9 6 L7.4 4.6 M9 6 L10.4 4.4" stroke="#d4d4d4" stroke-width="1" fill="none"/></svg>
<div style="left:455px;top:60.5px;width:18px;height:2px;background:#3c3c3c;"></div>
<div style="left:457px;top:64.5px;width:14px;height:1px;background:#3a3a3a;border-top:1px dotted #666;"></div>
<svg style="left:459px;top:67.5px" width="11" height="11" viewBox="0 0 11 11"><rect x="1" y="1.5" width="3.5" height="4.5" fill="#d4d4d4"/><rect x="5.5" y="1.5" width="1.6" height="1.6" fill="#d4d4d4"/><rect x="5.5" y="4" width="3.6" height="1.6" fill="#d4d4d4"/><rect x="0.5" y="7.6" width="9.5" height="1.8" fill="#ececec"/></svg>
<div style="left:455px;top:80.5px;width:18px;height:1.5px;background:#3c3c3c;"></div>
<div style="left:475px;top:40.5px;width:125px;height:423.5px;background:#454545;"></div>
<span class="t" style="left:590px;top:30.799999999999997px;font-size:5px;color:#cfcfcf;">»</span>
<div style="left:475px;top:40.5px;width:125px;height:9px;background:#353535;"></div>
<div style="left:476.0px;top:41.0px;width:19px;height:8.5px;background:#454545;"></div>
<span class="t" style="left:478.5px;top:39.3px;font-size:6.3px;color:#f0f0f0;">颜色</span>
<div style="left:495.0px;top:41.0px;width:18.5px;height:8.5px;background:#3d3d3d;border-right:1px solid #2c2c2c;"></div>
<span class="t" style="left:497.5px;top:39.3px;font-size:6.3px;color:#9c9c9c;">色板</span>
<svg style="left:586.5px;top:42.8px" width="8" height="5" viewBox="0 0 8 5"><path d="M0 0 L3 0 L1.5 2 Z" fill="#ddd"/><path d="M3.5 0.5 H8 M3.5 2.5 H8 M3.5 4.5 H8" stroke="#ddd" stroke-width="0.8"/></svg>
<div style="left:483.3px;top:61.2px;width:9px;height:8.4px;background:#ffffff;border:1px solid #2a2a2a;outline:0.6px solid #aaa;outline-offset:-1.6px;"></div>
<div style="left:478px;top:55.3px;width:9.4px;height:9.2px;background:#ffffff;border:1px solid #2a2a2a;"></div>
<span class="t" style="left:497.5px;top:52.5px;font-size:5.6px;color:#dcdcdc;">R</span>
<div style="left:504.5px;top:54.8px;width:42px;height:3.6px;background:linear-gradient(90deg,#19d2c8,#ffffff);"></div>
<svg style="left:543.5px;top:59.1px" width="5" height="4" viewBox="0 0 5 4"><path d="M2.5 0 L5 3.6 L0 3.6 Z" fill="#e6e6e6" stroke="#333" stroke-width="0.5"/></svg>
<div style="left:549.5px;top:54.3px;width:24.5px;height:9.6px;background:#3a3a3a;border:1px solid #2c2c2c;"></div>
<span class="t" style="left:551.5px;top:53.1px;font-size:6.9px;color:#f4f4f4;">251</span>
<span class="t" style="left:497.5px;top:66px;font-size:5.6px;color:#dcdcdc;">G</span>
<div style="left:504.5px;top:68.3px;width:42px;height:3.6px;background:linear-gradient(90deg,#c93bc0,#ffffff);"></div>
<svg style="left:543.5px;top:72.6px" width="5" height="4" viewBox="0 0 5 4"><path d="M2.5 0 L5 3.6 L0 3.6 Z" fill="#e6e6e6" stroke="#333" stroke-width="0.5"/></svg>
<div style="left:549.5px;top:67.8px;width:24.5px;height:9.6px;background:#3a3a3a;border:1px solid #2c2c2c;"></div>
<span class="t" style="left:551.5px;top:66.6px;font-size:6.9px;color:#f4f4f4;">251</span>
<span class="t" style="left:497.5px;top:78.5px;font-size:5.6px;color:#dcdcdc;">B</span>
<div style="left:504.5px;top:80.8px;width:42px;height:3.6px;background:linear-gradient(90deg,#e8e020,#ffffff);"></div>
<svg style="left:543.5px;top:85.1px" width="5" height="4" viewBox="0 0 5 4"><path d="M2.5 0 L5 3.6 L0 3.6 Z" fill="#e6e6e6" stroke="#333" stroke-width="0.5"/></svg>
<div style="left:549.5px;top:80.3px;width:24.5px;height:9.6px;background:#3a3a3a;border:1px solid #2c2c2c;"></div>
<span class="t" style="left:551.5px;top:79.1px;font-size:6.9px;color:#f4f4f4;">251</span>
<div style="left:478px;top:96px;width:98px;height:7.8px;background:linear-gradient(180deg,rgba(255,255,255,.35),rgba(255,255,255,0) 25%,rgba(0,0,0,0) 35%,rgba(0,0,0,.55) 65%,rgba(0,0,0,1) 100%),linear-gradient(90deg,#f00,#ff0 17%,#0f0 33%,#0ff 50%,#00f 67%,#f0f 83%,#f00);"></div>
<div style="left:576px;top:96px;width:4px;height:3.9px;background:#ffffff;"></div>
<div style="left:576px;top:99.9px;width:4px;height:3.9px;background:#000000;"></div>
<div style="left:475px;top:106.5px;width:125px;height:1.2px;background:#2d2d2d;"></div>
<div style="left:475px;top:107.5px;width:125px;height:9px;background:#353535;"></div>
<div style="left:476.0px;top:108.0px;width:19px;height:8.5px;background:#454545;"></div>
<span class="t" style="left:478.5px;top:106.3px;font-size:6.3px;color:#f0f0f0;">调整</span>
<div style="left:496.8px;top:108.0px;width:17.5px;height:8.5px;background:#3d3d3d;border-right:1px solid #2c2c2c;"></div>
<span class="t" style="left:499.3px;top:106.3px;font-size:6.3px;color:#9c9c9c;">样式</span>
<div style="left:517.3px;top:108.0px;width:17.5px;height:8.5px;background:#3d3d3d;border-right:1px solid #2c2c2c;"></div>
<span class="t" style="left:519.8px;top:106.3px;font-size:6.3px;color:#9c9c9c;">字符</span>
<div style="left:537.1px;top:108.0px;width:17.5px;height:8.5px;background:#3d3d3d;border-right:1px solid #2c2c2c;"></div>
<span class="t" style="left:539.6px;top:106.3px;font-size:6.3px;color:#9c9c9c;">段落</span>
<svg style="left:586.5px;top:109.8px" width="8" height="5" viewBox="0 0 8 5"><path d="M0 0 L3 0 L1.5 2 Z" fill="#ddd"/><path d="M3.5 0.5 H8 M3.5 2.5 H8 M3.5 4.5 H8" stroke="#ddd" stroke-width="0.8"/></svg>
<span class="t" style="left:480.4px;top:117px;font-size:5.9px;color:#e6e6e6;">添加调整</span>
<svg style="left:498px;top:131.5px" width="10" height="9" viewBox="0 0 10 9"><circle cx="5" cy="4.5" r="1.7" fill="#d2d2d2"/><path d="M5 0 V1.6 M5 7.4 V9 M0.5 4.5 H2.1 M7.9 4.5 H9.5 M1.8 1.3 L2.9 2.4 M7.1 6.6 L8.2 7.7 M8.2 1.3 L7.1 2.4 M2.9 6.6 L1.8 7.7" stroke="#d2d2d2" stroke-width="0.8"/></svg>
<svg style="left:511px;top:131.5px" width="10" height="9" viewBox="0 0 10 9"><path d="M0.5 8 H9.5 V6 L8 3 L7 6 L6 1 L5 5.5 L4 2.5 L3 6 L2 4 L0.5 6.5 Z" fill="#d2d2d2"/></svg>
<svg style="left:523px;top:131.5px" width="10" height="9" viewBox="0 0 10 9"><rect x="0.6" y="0.6" width="8.8" height="7.8" fill="none" stroke="#d2d2d2" stroke-width="0.9"/><path d="M1.5 7.5 Q5 7 8.5 1.5" stroke="#d2d2d2" stroke-width="0.9" fill="none"/><path d="M3 1 V8 M6 1 V8 M1 3.5 H9 M1 6 H9" stroke="#8a8a8a" stroke-width="0.4"/></svg>
<svg style="left:535px;top:131.5px" width="10" height="9" viewBox="0 0 10 9"><rect x="0.6" y="0.6" width="8.8" height="7.8" fill="none" stroke="#d2d2d2" stroke-width="0.9"/><path d="M0.6 8.4 L9.4 0.6 V8.4 Z" fill="#8e8e8e"/><path d="M2 2.6 H4.4 M3.2 1.4 V3.8 M5.6 6.4 H8" stroke="#d2d2d2" stroke-width="0.8"/></svg>
<svg style="left:547.5px;top:131.5px" width="10" height="9" viewBox="0 0 10 9"><path d="M0.8 1 H9.2 L5 8.4 Z" fill="none" stroke="#d2d2d2" stroke-width="1.1"/><path d="M3 2.4 H7 L5 6 Z" fill="#8e8e8e"/></svg>
<svg style="left:492px;top:145.5px" width="10" height="9" viewBox="0 0 10 9"><rect x="0.6" y="0.6" width="8.8" height="7.8" fill="none" stroke="#d2d2d2" stroke-width="0.9"/><rect x="1.4" y="1.4" width="7.2" height="2.4" fill="#d2d2d2"/><rect x="1.4" y="4.6" width="3.4" height="3" fill="#8e8e8e"/></svg>
<svg style="left:505px;top:145.5px" width="10" height="9" viewBox="0 0 10 9"><path d="M5 0.5 V8 M1.5 2 H8.5 M3 8.4 H7" stroke="#d2d2d2" stroke-width="0.9"/><path d="M0 5.4 L1.5 2.2 L3 5.4 Q1.5 6.8 0 5.4 Z M7 5.4 L8.5 2.2 L10 5.4 Q8.5 6.8 7 5.4 Z" fill="#d2d2d2"/></svg>
<svg style="left:516.5px;top:145.5px" width="10" height="9" viewBox="0 0 10 9"><rect x="0.6" y="0.6" width="8.8" height="7.8" fill="none" stroke="#d2d2d2" stroke-width="0.9"/><rect x="5" y="0.6" width="4.4" height="7.8" fill="#d2d2d2"/></svg>
<svg style="left:528.5px;top:145.5px" width="10" height="9" viewBox="0 0 10 9"><rect x="0.6" y="0.8" width="6.4" height="5" fill="#8e8e8e" stroke="#d2d2d2" stroke-width="0.9"/><circle cx="6.6" cy="6" r="2.3" fill="#5a5a5a" stroke="#d2d2d2" stroke-width="0.9"/></svg>
<svg style="left:541px;top:145.5px" width="10" height="9" viewBox="0 0 10 9"><circle cx="5" cy="2.9" r="2.4" fill="none" stroke="#d2d2d2" stroke-width="1"/><circle cx="3.1" cy="5.9" r="2.4" fill="none" stroke="#d2d2d2" stroke-width="1"/><circle cx="6.9" cy="5.9" r="2.4" fill="none" stroke="#d2d2d2" stroke-width="1"/></svg>
<svg style="left:554px;top:145.5px" width="10" height="9" viewBox="0 0 10 9"><rect x="0.6" y="0.6" width="8.8" height="7.8" fill="none" stroke="#d2d2d2" stroke-width="0.9"/><path d="M0.6 3.2 H9.4 M0.6 5.8 H9.4 M3.6 0.6 V8.4 M6.4 0.6 V8.4" stroke="#d2d2d2" stroke-width="0.7"/></svg>
<svg style="left:498.5px;top:159.0px" width="10" height="9" viewBox="0 0 10 9"><rect x="0.6" y="0.6" width="8.8" height="7.8" fill="none" stroke="#d2d2d2" stroke-width="0.9"/><path d="M0.6 8.4 L9.4 0.6 V8.4 Z" fill="#8e8e8e"/><path d="M0.8 8.2 L9.2 0.8" stroke="#d2d2d2" stroke-width="0.8"/></svg>
<svg style="left:511px;top:159.0px" width="10" height="9" viewBox="0 0 10 9"><rect x="0.6" y="0.6" width="8.8" height="7.8" fill="none" stroke="#d2d2d2" stroke-width="0.9"/><path d="M0.6 8.4 V6 H3.4 V3.4 H6.4 V0.6 H9.4 V8.4 Z" fill="#8e8e8e"/><path d="M0.6 6 H3.4 V3.4 H6.4 V0.8 H9.4" stroke="#d2d2d2" stroke-width="0.8" fill="none"/></svg>
<svg style="left:523px;top:159.0px" width="10" height="9" viewBox="0 0 10 9"><rect x="0.6" y="0.6" width="8.8" height="7.8" fill="none" stroke="#d2d2d2" stroke-width="0.9"/><path d="M0.6 8.4 L9.4 0.6 V8.4 Z" fill="#d2d2d2"/></svg>
<svg style="left:535px;top:159.0px" width="10" height="9" viewBox="0 0 10 9"><rect x="0.6" y="0.6" width="8.8" height="7.8" fill="none" stroke="#d2d2d2" stroke-width="0.9"/><rect x="0.6" y="0.6" width="2.6" height="7.8" fill="#333"/><rect x="3.2" y="0.6" width="3" height="7.8" fill="#8e8e8e"/><rect x="6.2" y="0.6" width="3.2" height="7.8" fill="#d2d2d2"/></svg>
<svg style="left:547px;top:159.0px" width="10" height="9" viewBox="0 0 10 9"><rect x="0.6" y="0.6" width="8.8" height="7.8" fill="none" stroke="#d2d2d2" stroke-width="0.9"/><rect x="1.6" y="1.6" width="3.6" height="5.8" fill="#d2d2d2"/><path d="M6.4 2 H8.4 M6.4 4 H8.4 M6.4 6 H8.4" stroke="#d2d2d2" stroke-width="0.7"/></svg>
<div style="left:475px;top:173.5px;width:125px;height:1.2px;background:#2d2d2d;"></div>
<div style="left:475px;top:174.5px;width:125px;height:9px;background:#353535;"></div>
<div style="left:476.0px;top:175.0px;width:19px;height:8.5px;background:#454545;"></div>
<span class="t" style="left:478.5px;top:173.3px;font-size:6.3px;color:#f0f0f0;">图层</span>
<div style="left:496.5px;top:175.0px;width:18.5px;height:8.5px;background:#3d3d3d;border-right:1px solid #2c2c2c;"></div>
<span class="t" style="left:499px;top:173.3px;font-size:6.3px;color:#9c9c9c;">通道</span>
<div style="left:516.5px;top:175.0px;width:18.5px;height:8.5px;background:#3d3d3d;border-right:1px solid #2c2c2c;"></div>
<span class="t" style="left:519px;top:173.3px;font-size:6.3px;color:#9c9c9c;">路径</span>
<svg style="left:586.5px;top:176.8px" width="8" height="5" viewBox="0 0 8 5"><path d="M0 0 L3 0 L1.5 2 Z" fill="#ddd"/><path d="M3.5 0.5 H8 M3.5 2.5 H8 M3.5 4.5 H8" stroke="#ddd" stroke-width="0.8"/></svg>
<div style="left:478px;top:186.5px;width:34px;height:8.6px;background:linear-gradient(180deg,#616161,#505050);border:1px solid #303030;border-radius:1px;"></div>
<svg style="left:480px;top:188.5px" width="5" height="5" viewBox="0 0 5 5"><circle cx="2.8" cy="2" r="1.5" fill="none" stroke="#ddd" stroke-width="0.8"/><path d="M1.7 3.1 L0.3 4.7" stroke="#ddd" stroke-width="0.9"/></svg>
<span class="t" style="left:486.5px;top:185px;font-size:6.2px;color:#e4e4e4;">类型</span>
<svg style="left:506.5px;top:188.2px" width="4" height="6" viewBox="0 0 4 6"><path d="M0 2.4 L2 0 L4 2.4 Z M0 3.6 L2 6 L4 3.6 Z" fill="#d0d0d0"/></svg>
<svg style="left:523px;top:187px" width="8" height="8" viewBox="0 0 8 8"><rect x="0.6" y="1" width="6.8" height="6" fill="none" stroke="#d4d4d4" stroke-width="0.9"/><path d="M1 6.4 L3 3.6 L4.4 5.4 L5.4 4.4 L7 6.4 Z" fill="#d4d4d4"/></svg>
<svg style="left:535px;top:187px" width="8" height="8" viewBox="0 0 8 8"><circle cx="4" cy="4" r="3.2" fill="none" stroke="#d4d4d4" stroke-width="0.9"/><path d="M4 0.8 A3.2 3.2 0 0 1 4 7.2 Z" fill="#d4d4d4"/></svg>
<svg style="left:547px;top:187px" width="8" height="8" viewBox="0 0 8 8"><path d="M1 1 H7 V2.6 H6.3 V2 H4.6 V6.6 H5.6 V7.4 H2.4 V6.6 H3.4 V2 H1.7 V2.6 H1 Z" fill="#d4d4d4"/></svg>
<svg style="left:559px;top:187px" width="8" height="8" viewBox="0 0 8 8"><rect x="1.4" y="1.4" width="5.2" height="5.2" fill="none" stroke="#d4d4d4" stroke-width="0.8"/><rect x="0.4" y="0.4" width="2" height="2" fill="#d4d4d4"/><rect x="5.6" y="0.4" width="2" height="2" fill="#d4d4d4"/><rect x="0.4" y="5.6" width="2" height="2" fill="#d4d4d4"/><rect x="5.6" y="5.6" width="2" height="2" fill="#d4d4d4"/></svg>
<svg style="left:570.5px;top:187px" width="8" height="8" viewBox="0 0 8 8"><rect x="0.8" y="0.8" width="5" height="5" fill="#8e8e8e" stroke="#d4d4d4" stroke-width="0.8"/><rect x="3.6" y="3.6" width="3.6" height="3.6" fill="#d4d4d4"/></svg>
<div style="left:589.5px;top:186.5px;width:4px;height:8.6px;background:#6a6a6a;border:1px solid #2c2c2c;border-radius:1px;"></div>
<div style="left:590.5px;top:187.5px;width:2px;height:3px;background:#e0e0e0;"></div>
<div style="left:475px;top:197px;width:125px;height:1px;background:#3a3a3a;"></div>
<div style="left:478px;top:200px;width:55.5px;height:9.4px;background:linear-gradient(180deg,#636363,#505050);border:1px solid #303030;border-radius:1px;"></div>
<span class="t" style="left:481px;top:198.8px;font-size:6.2px;color:#e4e4e4;">正常</span>
<svg style="left:528px;top:201.8px" width="4" height="6" viewBox="0 0 4 6"><path d="M0 2.4 L2 0 L4 2.4 Z M0 3.6 L2 6 L4 3.6 Z" fill="#d0d0d0"/></svg>
<span class="t" style="left:536.5px;top:198.8px;font-size:6.2px;color:#e4e4e4;">不透明度:</span>
<div style="left:566px;top:200px;width:19.5px;height:9.4px;background:#383838;border:1px solid #2c2c2c;"></div>
<span class="t" style="left:568px;top:198.8px;font-size:6px;color:#f0f0f0;">100%</span>
<div style="left:586px;top:200px;width:6.5px;height:9.4px;background:#5a5a5a;border:1px solid #2c2c2c;"></div>
<svg style="left:587.8px;top:203.8px" width="3" height="2" viewBox="0 0 3 2"><path d="M0 0 L3 0 L1.5 2 Z" fill="#ddd"/></svg>
<span class="t" style="left:478.5px;top:213.5px;font-size:6.2px;color:#e4e4e4;">锁定:</span>
<svg style="left:496.5px;top:216px" width="7" height="7" viewBox="0 0 7 7"><rect x="0.5" y="0.5" width="6" height="6" fill="#5c5c5c" stroke="#9a9a9a" stroke-width="0.6"/><path d="M0.5 0.5 H3.5 V3.5 H0.5 Z M3.5 3.5 H6.5 V6.5 H3.5 Z" fill="#8a8a8a"/></svg>
<svg style="left:508px;top:215.5px" width="8" height="8" viewBox="0 0 8 8"><path d="M7 0.6 L7.6 1.2 L3.4 5.6 L2.6 4.8 Z" fill="#d0d0d0"/><path d="M2.4 5.2 L3.2 6 Q2.2 7.6 0.4 7.4 Q1.8 6.6 2.4 5.2 Z" fill="#d0d0d0"/></svg>
<svg style="left:518.5px;top:215.5px" width="8" height="8" viewBox="0 0 8 8"><path d="M4 0.4 V7.6 M0.4 4 H7.6 M4 0.4 L3 1.6 M4 0.4 L5 1.6 M4 7.6 L3 6.4 M4 7.6 L5 6.4 M0.4 4 L1.6 3 M0.4 4 L1.6 5 M7.6 4 L6.4 3 M7.6 4 L6.4 5" stroke="#d0d0d0" stroke-width="0.8" fill="none"/></svg>
<svg style="left:529.5px;top:215.5px" width="7" height="8" viewBox="0 0 7 8"><rect x="0.6" y="3.6" width="5.8" height="4" fill="#d0d0d0"/><path d="M1.8 3.6 V2.4 Q1.8 0.8 3.5 0.8 Q5.2 0.8 5.2 2.4 V3.6" fill="none" stroke="#d0d0d0" stroke-width="0.9"/></svg>
<span class="t" style="left:549.5px;top:213.5px;font-size:6.2px;color:#e4e4e4;">填充:</span>
<div style="left:566.5px;top:214.8px;width:19px;height:9.4px;background:#cfe8cf;border:1px solid #2c2c2c;"></div>
<span class="t" style="left:568.5px;top:213.6px;font-size:6.2px;color:#000;font-weight:bold;">0%</span>
<div style="left:586px;top:214.8px;width:6.5px;height:9.4px;background:#5a5a5a;border:1px solid #2c2c2c;"></div>
<svg style="left:587.8px;top:218.6px" width="3" height="2" viewBox="0 0 3 2"><path d="M0 0 L3 0 L1.5 2 Z" fill="#ddd"/></svg>
<div style="left:476px;top:228.5px;width:114px;height:222px;background:#454545;"></div>
<div style="left:476px;top:228.5px;width:114px;height:18.5px;background:#4d6079;"></div>
<div style="left:476px;top:228.5px;width:14px;height:18.5px;background:#4a4a4a;border-right:1px solid #383838;"></div>
<svg style="left:478.5px;top:235.5px" width="7" height="5" viewBox="0 0 7 5"><path d="M0.3 2.5 Q3.5 -0.8 6.7 2.5 Q3.5 5.8 0.3 2.5 Z" fill="none" stroke="#d8d8d8" stroke-width="0.8"/><circle cx="3.5" cy="2.5" r="1.1" fill="#d8d8d8"/></svg>
<div style="left:492px;top:231.7px;width:18.5px;height:10.8px;background:#4a5a70;border:1px dashed #f0f0f0;"></div>
<div style="left:493.5px;top:233px;width:9px;height:8.2px;background:#ffffff;"></div>
<div style="left:504px;top:234.5px;width:6px;height:6.5px;background:#46566c;border:1px solid #f0f0f0;"></div>
<span class="t" style="left:513.5px;top:232px;font-size:6.2px;color:#f2f2f2;">椭圆 2</span>
<span class="t" style="left:575.5px;top:232px;font-size:6.4px;color:#e0e0e0;font-style:italic;font-family:'Liberation Serif',serif;">fx</span>
<div style="left:476px;top:247px;width:114px;height:1px;background:#3a3a3a;"></div>
<svg style="left:498.5px;top:249.8px" width="7" height="5" viewBox="0 0 7 5"><path d="M0.3 2.5 Q3.5 -0.8 6.7 2.5 Q3.5 5.8 0.3 2.5 Z" fill="none" stroke="#c8c8c8" stroke-width="0.8"/><circle cx="3.5" cy="2.5" r="1.1" fill="#c8c8c8"/></svg>
<span class="t" style="left:509px;top:246.3px;font-size:6.2px;color:#dcdcdc;">效果</span>
<svg style="left:509.0px;top:259.1px" width="7" height="5" viewBox="0 0 7 5"><path d="M0.3 2.5 Q3.5 -0.8 6.7 2.5 Q3.5 5.8 0.3 2.5 Z" fill="none" stroke="#c8c8c8" stroke-width="0.8"/><circle cx="3.5" cy="2.5" r="1.1" fill="#c8c8c8"/></svg>
<span class="t" style="left:519px;top:255.60000000000002px;font-size:6.2px;color:#dcdcdc;">描边</span>
<div style="left:476px;top:267.3px;width:114px;height:1px;background:#353535;"></div>
<div style="left:476px;top:268px;width:14px;height:18.5px;background:#4a4a4a;border-right:1px solid #383838;"></div>
<svg style="left:478.5px;top:275.0px" width="7" height="5" viewBox="0 0 7 5"><path d="M0.3 2.5 Q3.5 -0.8 6.7 2.5 Q3.5 5.8 0.3 2.5 Z" fill="none" stroke="#d8d8d8" stroke-width="0.8"/><circle cx="3.5" cy="2.5" r="1.1" fill="#d8d8d8"/></svg>
<div style="left:492.5px;top:269.3px;width:15.8px;height:15.2px;background:#0ff4fb;border:1px solid #2a2a2a;border-radius:2.5px;"></div>
<div style="left:501.5px;top:278px;width:7px;height:6.6px;background:#484848;"></div>
<div style="left:502.8px;top:279px;width:6.2px;height:5.8px;background:#505050;border:1px solid #e8e8e8;"></div>
<span class="t" style="left:513.5px;top:271.5px;font-size:6.2px;color:#f2f2f2;">椭圆 1</span>
<span class="t" style="left:575.5px;top:271.5px;font-size:6.4px;color:#e0e0e0;font-style:italic;font-family:'Liberation Serif',serif;">fx</span>
<div style="left:476px;top:286.5px;width:114px;height:1px;background:#3a3a3a;"></div>
<svg style="left:498.5px;top:289.1px" width="7" height="5" viewBox="0 0 7 5"><path d="M0.3 2.5 Q3.5 -0.8 6.7 2.5 Q3.5 5.8 0.3 2.5 Z" fill="none" stroke="#c8c8c8" stroke-width="0.8"/><circle cx="3.5" cy="2.5" r="1.1" fill="#c8c8c8"/></svg>
<span class="t" style="left:509px;top:285.6px;font-size:6.2px;color:#dcdcdc;">效果</span>
<svg style="left:509.0px;top:298.5px" width="7" height="5" viewBox="0 0 7 5"><path d="M0.3 2.5 Q3.5 -0.8 6.7 2.5 Q3.5 5.8 0.3 2.5 Z" fill="none" stroke="#c8c8c8" stroke-width="0.8"/><circle cx="3.5" cy="2.5" r="1.1" fill="#c8c8c8"/></svg>
<span class="t" style="left:519px;top:295px;font-size:6.2px;color:#dcdcdc;">描边</span>
<div style="left:476px;top:307px;width:114px;height:1px;background:#353535;"></div>
<div style="left:476px;top:307.5px;width:14px;height:18.5px;background:#4a4a4a;border-right:1px solid #383838;"></div>
<svg style="left:478.5px;top:314.5px" width="7" height="5" viewBox="0 0 7 5"><path d="M0.3 2.5 Q3.5 -0.8 6.7 2.5 Q3.5 5.8 0.3 2.5 Z" fill="none" stroke="#d8d8d8" stroke-width="0.8"/><circle cx="3.5" cy="2.5" r="1.1" fill="#d8d8d8"/></svg>
<div style="left:493px;top:308.3px;width:15.3px;height:15.2px;background:#ffffff;border:1px solid #2a2a2a;"></div>
<span class="t" style="left:514px;top:311px;font-size:6.2px;color:#f2f2f2;font-style:italic;transform:skewX(-10deg);">背景</span>
<svg style="left:575.5px;top:313px" width="6" height="8" viewBox="0 0 6 8"><rect x="0.4" y="3.6" width="5.2" height="3.8" fill="none" stroke="#d0d0d0" stroke-width="0.8"/><path d="M1.4 3.6 V2.4 Q1.4 0.8 3 0.8 Q4.6 0.8 4.6 2.4 V3.6" fill="none" stroke="#d0d0d0" stroke-width="0.8"/></svg>
<div style="left:476px;top:326px;width:114px;height:1px;background:#353535;"></div>
<div style="left:584px;top:228.5px;width:5.5px;height:19px;background:linear-gradient(180deg,#c4c4c4,#a0a0a0 35%,#6c6c6c 100%);"></div>
<svg style="left:585.2px;top:235.0px" width="3" height="3" viewBox="0 0 3 3"><path d="M0 2.6 L3 2.6 L1.5 0 Z" fill="#444"/></svg>
<div style="left:584px;top:266.5px;width:5.5px;height:20.5px;background:linear-gradient(180deg,#c4c4c4,#a0a0a0 35%,#6c6c6c 100%);"></div>
<svg style="left:585.2px;top:273.0px" width="3" height="3" viewBox="0 0 3 3"><path d="M0 2.6 L3 2.6 L1.5 0 Z" fill="#444"/></svg>
<div style="left:590px;top:228.5px;width:1.6px;height:222px;background:#383838;"></div>
<div style="left:591.6px;top:228.5px;width:8.4px;height:222px;background:#4a4a4a;"></div>
<div style="left:475px;top:450.5px;width:125px;height:13.5px;background:#4a4a4a;border-top:1px solid #333;"></div>
<svg style="left:493px;top:453px" width="8" height="8" viewBox="0 0 8 8"><rect x="0.4" y="2.4" width="3.4" height="3" rx="1.5" fill="none" stroke="#777" stroke-width="0.8"/><rect x="4.2" y="2.4" width="3.4" height="3" rx="1.5" fill="none" stroke="#777" stroke-width="0.8"/></svg>
<span class="t" style="left:506.5px;top:451px;font-size:6.6px;color:#e0e0e0;font-style:italic;font-family:'Liberation Serif',serif;">fx</span>
<svg style="left:512.5px;top:459px" width="2" height="2" viewBox="0 0 2 2"><path d="M0 0 L2 0 L1 1.6 Z" fill="#ccc"/></svg>
<svg style="left:521px;top:453px" width="8" height="8" viewBox="0 0 8 8"><rect x="0.5" y="1" width="7" height="6" fill="#d8d8d8"/><circle cx="4" cy="4" r="1.8" fill="#444"/></svg>
<svg style="left:534px;top:453px" width="8" height="8" viewBox="0 0 8 8"><circle cx="4" cy="4" r="3.2" fill="none" stroke="#d8d8d8" stroke-width="0.9"/><path d="M1.7 6.3 A3.2 3.2 0 0 1 6.3 1.7 Z" fill="#d8d8d8"/></svg>
<svg style="left:542.5px;top:459px" width="2" height="2" viewBox="0 0 2 2"><path d="M0 0 L2 0 L1 1.6 Z" fill="#ccc"/></svg>
<svg style="left:548px;top:453px" width="8" height="8" viewBox="0 0 8 8"><path d="M0.4 1.4 H3.2 L4 2.4 H7.6 V7 H0.4 Z" fill="#d8d8d8"/></svg>
<svg style="left:561px;top:453px" width="8" height="8" viewBox="0 0 8 8"><path d="M0.8 0.8 H5.4 L7.2 2.6 V7.4 H0.8 Z" fill="#d8d8d8"/><path d="M5.2 0.8 V2.8 H7.2" fill="none" stroke="#484848" stroke-width="0.6"/></svg>
<svg style="left:574px;top:453px" width="8" height="8" viewBox="0 0 8 8"><path d="M1.4 2.4 H6.6 L6 7.6 H2 Z" fill="#9a9a9a"/><path d="M0.8 1.8 H7.2 M3 1.6 V0.8 H5 V1.6" stroke="#9a9a9a" stroke-width="0.8" fill="none"/></svg>
<div style="left:545px;top:211px;width:47.5px;height:17.3px;border:1.7px solid #b8363e;"></div>
<svg style="left:0;top:0" width="600" height="464" viewBox="0 0 600 464"><path d="M538.8 356.4 L540.2 356.6 L557.2 250.4 L552.4 249.8 Z" fill="#e4383b"/><path d="M554.9 242.8 L559.7 251.0 L550.1 249.8 Z" fill="#e4383b"/></svg>
<div style="left:597px;top:40.5px;width:1px;height:423.5px;background:#3a3a3a;"></div>
</div></body></html>
